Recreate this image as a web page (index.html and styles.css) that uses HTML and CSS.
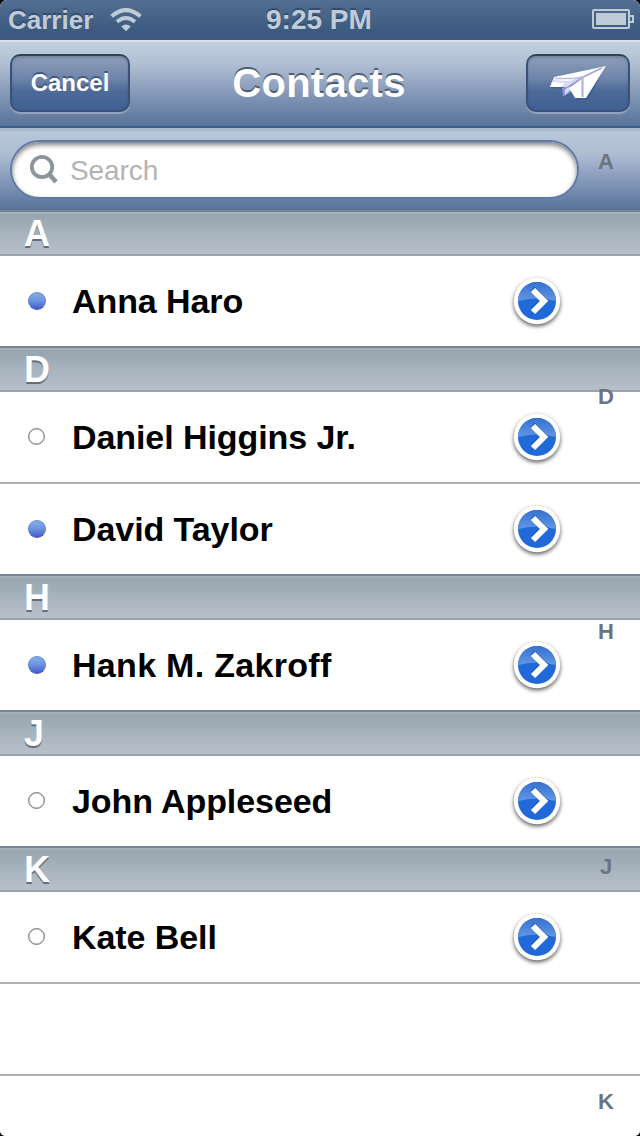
FILE: index.html
```
<!DOCTYPE html>
<html lang="en">
<head>
<meta charset="utf-8">
<title>Contacts</title>
<link rel="stylesheet" href="styles.css">
</head>
<body>
<svg class="defs" width="0" height="0" aria-hidden="true">
  <defs>
    <linearGradient id="gloss" x1="0" y1="0" x2="0" y2="1">
      <stop offset="0" stop-color="#3472d2"/><stop offset="1" stop-color="#6296e3"/>
    </linearGradient>
    <symbol id="disclosure" viewBox="0 0 48 48">
      <circle cx="24" cy="24" r="23.2" fill="#fff"/>
      <circle cx="24" cy="24" r="19" fill="#1f69d9"/>
      <path d="M5 24a19 19 0 0 1 38 0Q24 19 5 24z" fill="url(#gloss)"/>
      <path d="M19.500 11.500 30.500 22.500 19.500 33.500" fill="none" stroke="#164b9e" stroke-width="5.500" opacity=".5"/>
      <path d="M20 13 31 24 20 35" fill="none" stroke="#fff" stroke-width="6"/>
    </symbol>
  </defs>
</svg>
<div class="phone">
  <header class="status">
    <span class="carrier">Carrier</span>
    <svg class="wifi" width="32" height="24" viewBox="0 0 32 24" fill="none" stroke="#c0cbd8" stroke-width="4">
      <path d="M1.6 8.3Q16-4.200 30.400 8.300"/>
      <path d="M7 13.700Q16 6.300 25 13.700"/>
      <path d="M16 23.200 11.300 18.400Q16 14.500 20.700 18.400z" fill="#c0cbd8" stroke="none"/>
    </svg>
    <span class="time">9:25 PM</span>
    <svg class="battery" width="42" height="20" viewBox="0 0 42 20">
      <rect x="1" y="1" width="36" height="18" rx="1" fill="none" stroke="#c0cbd8" stroke-width="2"/>
      <rect x="4" y="4" width="30" height="12" fill="#c0cbd8"/>
      <path d="M38 7h3v6h-3" fill="none" stroke="#c0cbd8" stroke-width="2"/>
    </svg>
  </header>
  <nav class="navbar">
    <button class="btn cancel">Cancel</button>
    <h1 class="title">Contacts</h1>
    <button class="btn send" aria-label="Send">
      <svg width="60" height="38" viewBox="0 0 60 38">
        <path d="M5 13 58 2 40 36H28L22 29 15 35 14 25 1 24z" fill="#344f87" opacity=".4"/>
        <path d="M14 24 22 21 23 28 15 33z" fill="#8f92d5"/>
        <path d="M17 26 21 22 22 26 17 31z" fill="#dedff8"/>
        <path d="M6 13 58 2 24 20 19 23 2 23z" fill="#fff"/>
        <path d="M5 16 19 17 30 15 18 23 2 23z" fill="#d9daf4"/>
        <path d="M4 18 17 19 13 23 2 23z" fill="#fff"/>
        <path d="M58 2 38 34H27L21 24 35 14z" fill="#fff"/>
        <path d="M54 4 34 13.500 19 23.500" fill="none" stroke="#a5a7dc" stroke-width="1.600"/>
        <path d="M34.500 14V33" fill="none" stroke="#b0b2e2" stroke-width="2.200"/>
        <path d="M7 14.500H27L34 13" fill="none" stroke="#b8bae8" stroke-width="1.300"/>
      </svg>
    </button>
  </nav>
  <div class="searchbar">
    <div class="field">
      <svg width="30" height="32" viewBox="0 0 30 32" fill="none" stroke="#8d949b">
        <circle cx="13" cy="13" r="10.200" stroke-width="3.800"/>
        <path d="M20 20 27 28" stroke-width="4.600"/>
      </svg>
      <span>Search</span>
    </div>
  </div>
  <main class="list">
    <h2 class="section">A</h2>
    <div class="row"><i class="dot on"></i><span class="name">Anna Haro</span><svg class="go"><use href="#disclosure"/></svg></div>
    <h2 class="section">D</h2>
    <div class="row ruled"><i class="dot"></i><span class="name">Daniel Higgins Jr.</span><svg class="go"><use href="#disclosure"/></svg></div>
    <div class="row"><i class="dot on"></i><span class="name">David Taylor</span><svg class="go"><use href="#disclosure"/></svg></div>
    <h2 class="section">H</h2>
    <div class="row"><i class="dot on"></i><span class="name wide">Hank M. Zakroff</span><svg class="go"><use href="#disclosure"/></svg></div>
    <h2 class="section">J</h2>
    <div class="row"><i class="dot"></i><span class="name">John Appleseed</span><svg class="go"><use href="#disclosure"/></svg></div>
    <h2 class="section">K</h2>
    <div class="row ruled"><i class="dot"></i><span class="name">Kate Bell</span><svg class="go"><use href="#disclosure"/></svg></div>
    <div class="row ruled"></div>
  </main>
  <aside class="index"><span>A</span><span>D</span><span>H</span><span>J</span><span>K</span></aside>
</div>
</body>
</html>
```
FILE: styles.css
```
* { box-sizing: border-box; }
body { margin: 0; background: #000; font-family: "Liberation Sans", Arial, sans-serif; }
.defs { position: absolute; }
.phone {
  position: relative; width: 640px; height: 1136px; overflow: hidden;
  background: #fff; border-radius: 7px 7px 5px 5px;
}
.status {
  height: 40px; padding: 0 6px 0 8px;
  display: grid; grid-template-columns: 102px 156px 1fr auto; align-items: center;
  background: linear-gradient(#536f93, #3d5a80 75%, #3c5a81);
  color: #c0cbd8; font-weight: bold; font-size: 28px; line-height: 40px;
  text-shadow: 0 -2px 1px #304b6d;
}
.carrier { font-size: 26px; }
.wifi { margin-top: -1px; }
.battery { margin-top: -2px; }
.navbar {
  height: 88px; padding: 12px 10px 0; display: flex; justify-content: space-between; align-items: flex-start;
  background: linear-gradient(#c2cfdf, #b2c0d4 25%, #8094b5 65%, #587499);
  border-top: 2px solid #d8e1eb; border-bottom: 2px solid #3b5a86;
}
.btn {
  height: 58px; padding: 0; border: 2px solid #3b5278; border-top-color: #344256; border-radius: 10px;
  background: linear-gradient(#8e9fbb, #6d84aa 42%, #4d6a99 65%, #3f6094);
  box-shadow: 0 2px 0 rgba(190, 205, 225, .45), inset 0 2px 2px rgba(40, 55, 80, .25);
  color: #fff; font: bold 24px/54px "Liberation Sans", Arial, sans-serif; text-shadow: 0 -2px 0 #44587a;
  display: flex; align-items: center; justify-content: center;
}
.cancel { width: 120px; }
.send { width: 104px; }
.title { margin: 0 18px 0 0; width: 180px; font-size: 40px; line-height: 58px; letter-spacing: .3px; color: #fff; text-align: center; text-shadow: 0 -2px 0 #4d5c73; }
.searchbar {
  height: 82px; padding: 9px 61px 0 10px;
  background: linear-gradient(#b9c7da, #adbcd2 30%, #7e93b5 68%, #587299);
  border-top: 3px solid #acbacb;
}
.field {
  height: 59px; display: flex; align-items: center; padding-left: 17px; gap: 11px;
  border: 2px solid #5d7ba4; border-radius: 30px; background: #fff;
  box-shadow: inset 0 3px 5px rgba(0, 0, 0, .5);
  font-size: 28px; letter-spacing: -.1px; color: #b3b3b3;
}
.field span { padding-top: 2px; }
.section {
  height: 46px; margin: 0; padding-left: 24px; font-size: 36px; line-height: 44px; color: #fff;
  background: linear-gradient(#94a3ae, #a7b3bd 50%, #b8c0ca);
  border-top: 2px solid #768591; border-bottom: 2px solid #98a3ae;
  box-shadow: inset 0 2px 0 #a4b1bb; text-shadow: 0 2px 0 #646e78;
}
.row { height: 90px; display: grid; grid-template-columns: 44px 441px 48px; align-items: center; padding-left: 28px; }
.ruled { height: 92px; border-bottom: 2px solid #b0b0b0; }
.dot { width: 17px; height: 17px; margin-top: -2px; border: 1.5px solid #808080; border-radius: 50%; box-shadow: inset 0 0 0 .5px #999; }
.dot.on { width: 18px; height: 18px; margin-top: 0; border: 1px solid #6380d4; border-bottom-color: #4655bd; background: linear-gradient(#80b1e4, #6c91de 50%, #4659cd); box-shadow: none; }
.name { font-size: 34px; line-height: 40px; letter-spacing: -.08px; font-weight: bold; color: #000; white-space: nowrap; }
.wide { letter-spacing: .3px; }
.go { width: 48px; height: 48px; overflow: visible; filter: drop-shadow(0 2px 2px rgba(0, 0, 0, .65)); }
.index {
  position: absolute; top: 150px; right: 22px; width: 24px; height: 964px;
  display: flex; flex-direction: column; justify-content: space-between; align-items: center;
  font-size: 22px; line-height: 24px; font-weight: bold; color: #6b7480;
}
```
